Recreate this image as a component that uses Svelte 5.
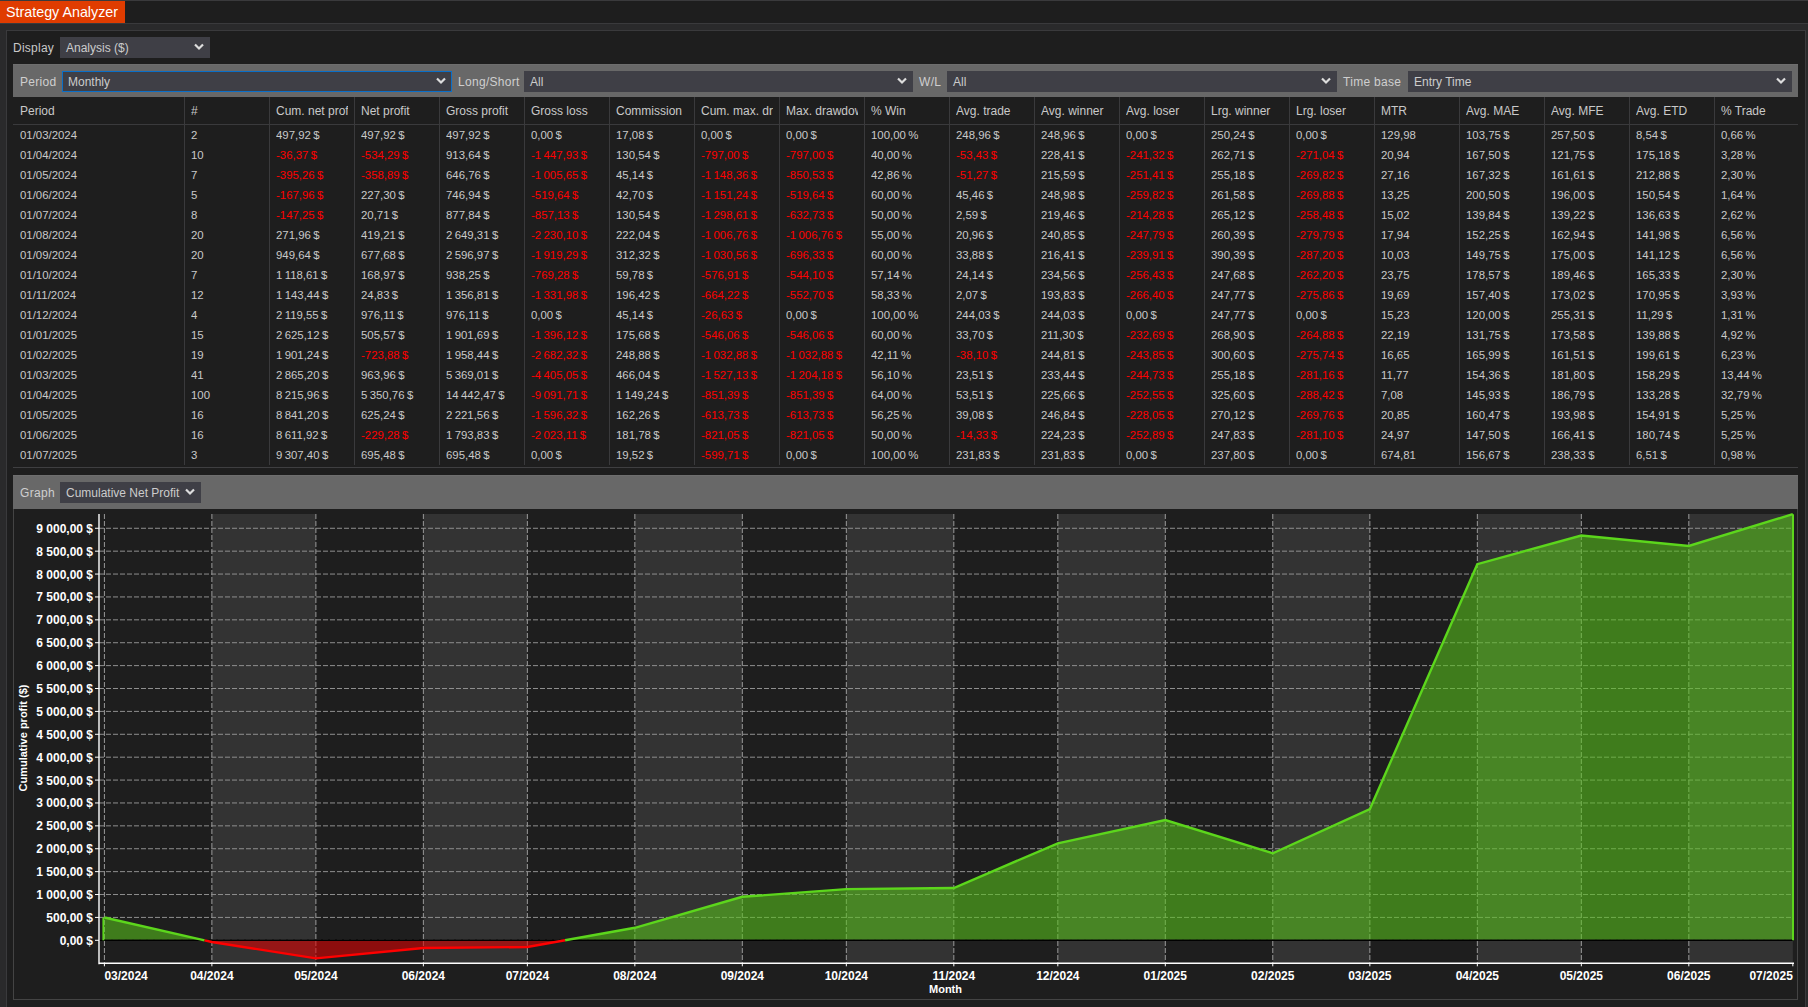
<script>
	const columns = [
		'Period', '#', 'Cum. net profit', 'Net profit', 'Gross profit', 'Gross loss', 'Commission',
		'Cum. max. drawdown', 'Max. drawdown', '% Win', 'Avg. trade', 'Avg. winner', 'Avg. loser',
		'Lrg. winner', 'Lrg. loser', 'MTR', 'Avg. MAE', 'Avg. MFE', 'Avg. ETD', '% Trade'
	];

	const rows = [
		['01/03/2024','2','497,92 $','497,92 $','497,92 $','0,00 $','17,08 $','0,00 $','0,00 $','100,00 %','248,96 $','248,96 $','0,00 $','250,24 $','0,00 $','129,98','103,75 $','257,50 $','8,54 $','0,66 %'],
		['01/04/2024','10','-36,37 $','-534,29 $','913,64 $','-1 447,93 $','130,54 $','-797,00 $','-797,00 $','40,00 %','-53,43 $','228,41 $','-241,32 $','262,71 $','-271,04 $','20,94','167,50 $','121,75 $','175,18 $','3,28 %'],
		['01/05/2024','7','-395,26 $','-358,89 $','646,76 $','-1 005,65 $','45,14 $','-1 148,36 $','-850,53 $','42,86 %','-51,27 $','215,59 $','-251,41 $','255,18 $','-269,82 $','27,16','167,32 $','161,61 $','212,88 $','2,30 %'],
		['01/06/2024','5','-167,96 $','227,30 $','746,94 $','-519,64 $','42,70 $','-1 151,24 $','-519,64 $','60,00 %','45,46 $','248,98 $','-259,82 $','261,58 $','-269,88 $','13,25','200,50 $','196,00 $','150,54 $','1,64 %'],
		['01/07/2024','8','-147,25 $','20,71 $','877,84 $','-857,13 $','130,54 $','-1 298,61 $','-632,73 $','50,00 %','2,59 $','219,46 $','-214,28 $','265,12 $','-258,48 $','15,02','139,84 $','139,22 $','136,63 $','2,62 %'],
		['01/08/2024','20','271,96 $','419,21 $','2 649,31 $','-2 230,10 $','222,04 $','-1 006,76 $','-1 006,76 $','55,00 %','20,96 $','240,85 $','-247,79 $','260,39 $','-279,79 $','17,94','152,25 $','162,94 $','141,98 $','6,56 %'],
		['01/09/2024','20','949,64 $','677,68 $','2 596,97 $','-1 919,29 $','312,32 $','-1 030,56 $','-696,33 $','60,00 %','33,88 $','216,41 $','-239,91 $','390,39 $','-287,20 $','10,03','149,75 $','175,00 $','141,12 $','6,56 %'],
		['01/10/2024','7','1 118,61 $','168,97 $','938,25 $','-769,28 $','59,78 $','-576,91 $','-544,10 $','57,14 %','24,14 $','234,56 $','-256,43 $','247,68 $','-262,20 $','23,75','178,57 $','189,46 $','165,33 $','2,30 %'],
		['01/11/2024','12','1 143,44 $','24,83 $','1 356,81 $','-1 331,98 $','196,42 $','-664,22 $','-552,70 $','58,33 %','2,07 $','193,83 $','-266,40 $','247,77 $','-275,86 $','19,69','157,40 $','173,02 $','170,95 $','3,93 %'],
		['01/12/2024','4','2 119,55 $','976,11 $','976,11 $','0,00 $','45,14 $','-26,63 $','0,00 $','100,00 %','244,03 $','244,03 $','0,00 $','247,77 $','0,00 $','15,23','120,00 $','255,31 $','11,29 $','1,31 %'],
		['01/01/2025','15','2 625,12 $','505,57 $','1 901,69 $','-1 396,12 $','175,68 $','-546,06 $','-546,06 $','60,00 %','33,70 $','211,30 $','-232,69 $','268,90 $','-264,88 $','22,19','131,75 $','173,58 $','139,88 $','4,92 %'],
		['01/02/2025','19','1 901,24 $','-723,88 $','1 958,44 $','-2 682,32 $','248,88 $','-1 032,88 $','-1 032,88 $','42,11 %','-38,10 $','244,81 $','-243,85 $','300,60 $','-275,74 $','16,65','165,99 $','161,51 $','199,61 $','6,23 %'],
		['01/03/2025','41','2 865,20 $','963,96 $','5 369,01 $','-4 405,05 $','466,04 $','-1 527,13 $','-1 204,18 $','56,10 %','23,51 $','233,44 $','-244,73 $','255,18 $','-281,16 $','11,77','154,36 $','181,80 $','158,29 $','13,44 %'],
		['01/04/2025','100','8 215,96 $','5 350,76 $','14 442,47 $','-9 091,71 $','1 149,24 $','-851,39 $','-851,39 $','64,00 %','53,51 $','225,66 $','-252,55 $','325,60 $','-288,42 $','7,08','145,93 $','186,79 $','133,28 $','32,79 %'],
		['01/05/2025','16','8 841,20 $','625,24 $','2 221,56 $','-1 596,32 $','162,26 $','-613,73 $','-613,73 $','56,25 %','39,08 $','246,84 $','-228,05 $','270,12 $','-269,76 $','20,85','160,47 $','193,98 $','154,91 $','5,25 %'],
		['01/06/2025','16','8 611,92 $','-229,28 $','1 793,83 $','-2 023,11 $','181,78 $','-821,05 $','-821,05 $','50,00 %','-14,33 $','224,23 $','-252,89 $','247,83 $','-281,10 $','24,97','147,50 $','166,41 $','180,74 $','5,25 %'],
		['01/07/2025','3','9 307,40 $','695,48 $','695,48 $','0,00 $','19,52 $','-599,71 $','0,00 $','100,00 %','231,83 $','231,83 $','0,00 $','237,80 $','0,00 $','674,81','156,67 $','238,33 $','6,51 $','0,98 %']
	];

	// chart scales, in page pixels (the svg viewBox starts at the panel corner)
	const dayX = (d) => 104.4 + d * 3.467;
	const valY = (v) => 940.3 - v * 0.04578;
	const plotTop = 514;
	const plotBottom = 963.3;
	const plotLeft = 99;
	const plotRight = 1793;

	const months = ['03/2024','04/2024','05/2024','06/2024','07/2024','08/2024','09/2024','10/2024','11/2024','12/2024','01/2025','02/2025','03/2025','04/2025','05/2025','06/2025','07/2025'];
	const days = [0,31,61,92,122,153,184,214,245,275,306,337,365,396,426,457,487];
	const cum = [497.92,-36.37,-395.26,-167.96,-147.25,271.96,949.64,1118.61,1143.44,2119.55,2625.12,1901.24,2865.2,8215.96,8841.2,8611.92,9307.4];

	const xs = days.map(dayX);
	const pts = cum.map((v, i) => [xs[i], valY(v)]);
	const zeroY = valY(0);
	const line = (a) => a.map((p) => p[0].toFixed(1) + ',' + p[1].toFixed(1)).join(' ');

	// split the curve where it crosses zero, green above and red below
	function segments() {
		const out = [];
		let cur = [];
		let sign = cum[0] >= 0;
		for (let i = 0; i < cum.length; i++) {
			const s = cum[i] >= 0;
			if (s !== sign) {
				const t = cum[i - 1] / (cum[i - 1] - cum[i]);
				const cross = [xs[i - 1] + t * (xs[i] - xs[i - 1]), zeroY];
				cur.push(cross);
				out.push({ up: sign, pts: cur });
				cur = [cross];
				sign = s;
			}
			cur.push(pts[i]);
		}
		out.push({ up: sign, pts: cur });
		return out;
	}
	const segs = segments();

	const bands = [];
	for (let i = 1; i + 1 < xs.length; i += 2) bands.push([xs[i], xs[i + 1]]);

	const ticks = [];
	for (let v = 0; v <= 9000; v += 500) {
		const whole = Math.floor(v / 1000);
		const rest = String(v % 1000).padStart(3, '0');
		ticks.push({ y: valY(v), label: (whole ? whole + ' ' + rest : String(v)) + ',00 $' });
	}
</script>

<style>
	:global(body) {
		margin: 0;
		background: #2a2a2b;
	}

	.app {
		width: 1808px;
		height: 1007px;
		overflow: hidden;
		font-family: "Liberation Sans", Arial, sans-serif;
		font-size: 12px;
		color: #c9c9c9;
		box-sizing: border-box;
		background: #2a2a2b;
		border-top: 1px solid #3a3a3c;
	}

	.topbar {
		height: 23px;
		box-sizing: border-box;
		background: #1e1e1e;
		border-bottom: 1px solid #3a3a3c;
	}

	.tab {
		display: block;
		width: 125px;
		height: 22px;
		line-height: 22px;
		box-sizing: border-box;
		padding-left: 6px;
		background: #e03c00;
		color: #fff;
		font-size: 14.3px;
	}

	.panel {
		margin: 6px 2px 0 6px;
		height: 977px;
		box-sizing: border-box;
		padding: 6px 7px 0 6px;
		border: 1px solid #3a3a3c;
		border-bottom: 0;
		background: #1e1e1e;
	}

	.display {
		display: flex;
		align-items: center;
		height: 21px;
		margin-bottom: 6px;
	}
	.display .lab {
		width: 47px;
		letter-spacing: 0.25px;
	}

	.select {
		position: relative;
		flex: none;
		height: 21px;
		line-height: 22px;
		box-sizing: border-box;
		padding-left: 6px;
		background: #3f3f46;
		color: #ccc;
		white-space: nowrap;
	}
	.select svg {
		position: absolute;
		right: 6px;
		top: 6px;
	}
	.select.focus {
		box-shadow: inset 0 0 0 1px #0a6fc8;
	}

	.bar {
		display: flex;
		align-items: center;
		box-sizing: border-box;
		height: 33px;
		padding-left: 7px;
		background: #686868;
		color: #cfcfcf;
		border-top: 1px solid #6e6e6e;
	}
	.bar .lab {
		flex: none;
		box-sizing: border-box;
		padding-top: 1px;
		letter-spacing: 0.3px;
	}

	.lab-period { width: 42px; }
	.lab-graph { width: 40px; }
	.lab-ls { width: 72px; padding-left: 6px; }
	.lab-wl { width: 34px; padding-left: 6px; }
	.lab-tb { width: 71px; padding-left: 6px; }

	.period { width: 390px; }
	.ls { width: 389px; }
	.wl { width: 390px; }
	.tb { width: 384px; }
	.disp { width: 150px; }
	.graph { width: 141px; }

	.table {
		border-bottom: 1px solid #3f3f41;
		height: 371px;
		box-sizing: border-box;
	}

	.head, .row {
		display: grid;
		grid-template-columns: 172px repeat(18, 85px) 1fr;
	}

	.head {
		height: 28px;
		line-height: 29px;
		border-bottom: 1px solid #3a3a3c;
		box-sizing: border-box;
	}

	.cell {
		height: 100%;
		box-sizing: border-box;
		padding: 0 6px;
		border-right: 1px solid #3a3a3c;
	}
	.cell:first-child {
		padding-left: 7px;
	}
	.cell:last-child {
		border-right: 0;
	}
	.cell > span {
		display: block;
		overflow: hidden;
		white-space: nowrap;
	}

	.row {
		height: 20px;
		line-height: 20px;
		font-size: 11.4px;
		word-spacing: -0.8px;
	}
	.row .neg {
		color: #f00;
	}

	.graphbar {
		margin-top: 7px;
		height: 34px;
	}

	.chart {
		height: 491px;
		border: 1px solid #444;
		border-top: 0;
		box-sizing: border-box;
	}
	.chart svg {
		display: block;
	}
	.chart text {
		font-family: "Liberation Sans", Arial, sans-serif;
		font-weight: 700;
		font-size: 12px;
		fill: #fff;
	}
	.chart text.small {
		font-size: 11px;
	}
</style>

<div class="app">
	<div class="topbar"><span class="tab">Strategy Analyzer</span></div>

	<div class="panel">
		<div class="display">
			<span class="lab">Display</span>
			<div class="select disp">Analysis ($)
				<svg width="10" height="8" viewBox="0 0 10 8"><path d="M1 1.5 5 5.5l4-4" fill="none" stroke="#ddd" stroke-width="2.2"/></svg>
			</div>
		</div>

		<div class="bar">
			<span class="lab lab-period">Period</span>
			<div class="select period focus">Monthly
				<svg width="10" height="8" viewBox="0 0 10 8"><path d="M1 1.5 5 5.5l4-4" fill="none" stroke="#ddd" stroke-width="2.2"/></svg>
			</div>
			<span class="lab lab-ls">Long/Short</span>
			<div class="select ls">All
				<svg width="10" height="8" viewBox="0 0 10 8"><path d="M1 1.5 5 5.5l4-4" fill="none" stroke="#ddd" stroke-width="2.2"/></svg>
			</div>
			<span class="lab lab-wl">W/L</span>
			<div class="select wl">All
				<svg width="10" height="8" viewBox="0 0 10 8"><path d="M1 1.5 5 5.5l4-4" fill="none" stroke="#ddd" stroke-width="2.2"/></svg>
			</div>
			<span class="lab lab-tb">Time base</span>
			<div class="select tb">Entry Time
				<svg width="10" height="8" viewBox="0 0 10 8"><path d="M1 1.5 5 5.5l4-4" fill="none" stroke="#ddd" stroke-width="2.2"/></svg>
			</div>
		</div>

		<div class="table">
			<div class="head">
				{#each columns as c}
					<div class="cell"><span>{c}</span></div>
				{/each}
			</div>
			{#each rows as r}
				<div class="row">
					{#each r as v}
						<div class="cell"><span class:neg={v[0] === '-'}>{v}</span></div>
					{/each}
				</div>
			{/each}
		</div>

		<div class="bar graphbar">
			<span class="lab lab-graph">Graph</span>
			<div class="select graph">Cumulative Net Profit
				<svg width="10" height="8" viewBox="0 0 10 8"><path d="M1 1.5 5 5.5l4-4" fill="none" stroke="#ddd" stroke-width="2.2"/></svg>
			</div>
		</div>

		<div class="chart">
			<svg width="1784" height="490" viewBox="14 509 1784 490">
				<rect x={plotLeft} y={plotTop} width={plotRight - plotLeft} height={plotBottom - plotTop} fill="#1e1e1e" />
				{#each bands as b}
					<rect x={b[0]} y={plotTop} width={b[1] - b[0]} height={plotBottom - plotTop} fill="#333" />
				{/each}

				{#each xs.slice(0, -1) as x}
					<line x1={x} x2={x} y1={plotTop} y2={plotBottom} stroke="#9a9a9a" stroke-dasharray="5 2" />
				{/each}
				{#each ticks as t}
					<line x1={plotLeft} x2={plotRight} y1={t.y} y2={t.y} stroke="#8f8f8f" stroke-dasharray="5 2" />
				{/each}

				{#each segs as s}
					<polygon
						points={line([[s.pts[0][0], zeroY], ...s.pts, [s.pts[s.pts.length - 1][0], zeroY]])}
						fill={s.up ? 'rgb(88,195,26)' : 'rgb(225,0,0)'}
						fill-opacity="0.57"
					/>
				{/each}

				<line x1={plotLeft} x2={plotRight} y1={zeroY} y2={zeroY} stroke="#000" stroke-width="1.4" />

				{#each segs as s}
					<polyline points={line(s.pts)} fill="none" stroke={s.up ? '#5cd61c' : '#f00'} stroke-width="2.4" />
				{/each}
				<line x1={xs[0] - 1} x2={xs[0] - 1} y1={pts[0][1]} y2={zeroY} stroke="#5cd61c" stroke-width="2" />
				<line x1={plotRight} x2={plotRight} y1={pts[16][1]} y2={zeroY} stroke="#5cd61c" stroke-width="2" />

				<line x1={plotLeft} x2={plotLeft} y1={plotTop} y2={plotBottom + 1} stroke="#fff" stroke-width="1.4" />
				<line x1={plotLeft} x2={plotRight + 1} y1={plotBottom} y2={plotBottom} stroke="#fff" stroke-width="1.4" />

				{#each ticks as t}
					<line x1={plotLeft - 4} x2={plotLeft} y1={t.y} y2={t.y} stroke="#fff" />
					<text x="93" y={t.y + 4.5} text-anchor="end">{t.label}</text>
				{/each}

				{#each xs as x, i}
					<line x1={x} x2={x} y1={plotBottom} y2={plotBottom + 3} stroke="#fff" />
					<text
						{x}
						y="980"
						text-anchor={i === 0 ? 'start' : i === 16 ? 'end' : 'middle'}
					>{months[i]}</text>
				{/each}

				<text x="945.5" y="993" text-anchor="middle" class="small">Month</text>
				<text x="0" y="0" text-anchor="middle" class="small" transform="translate(27 738) rotate(-90)">Cumulative profit ($)</text>
			</svg>
		</div>
	</div>
</div>
